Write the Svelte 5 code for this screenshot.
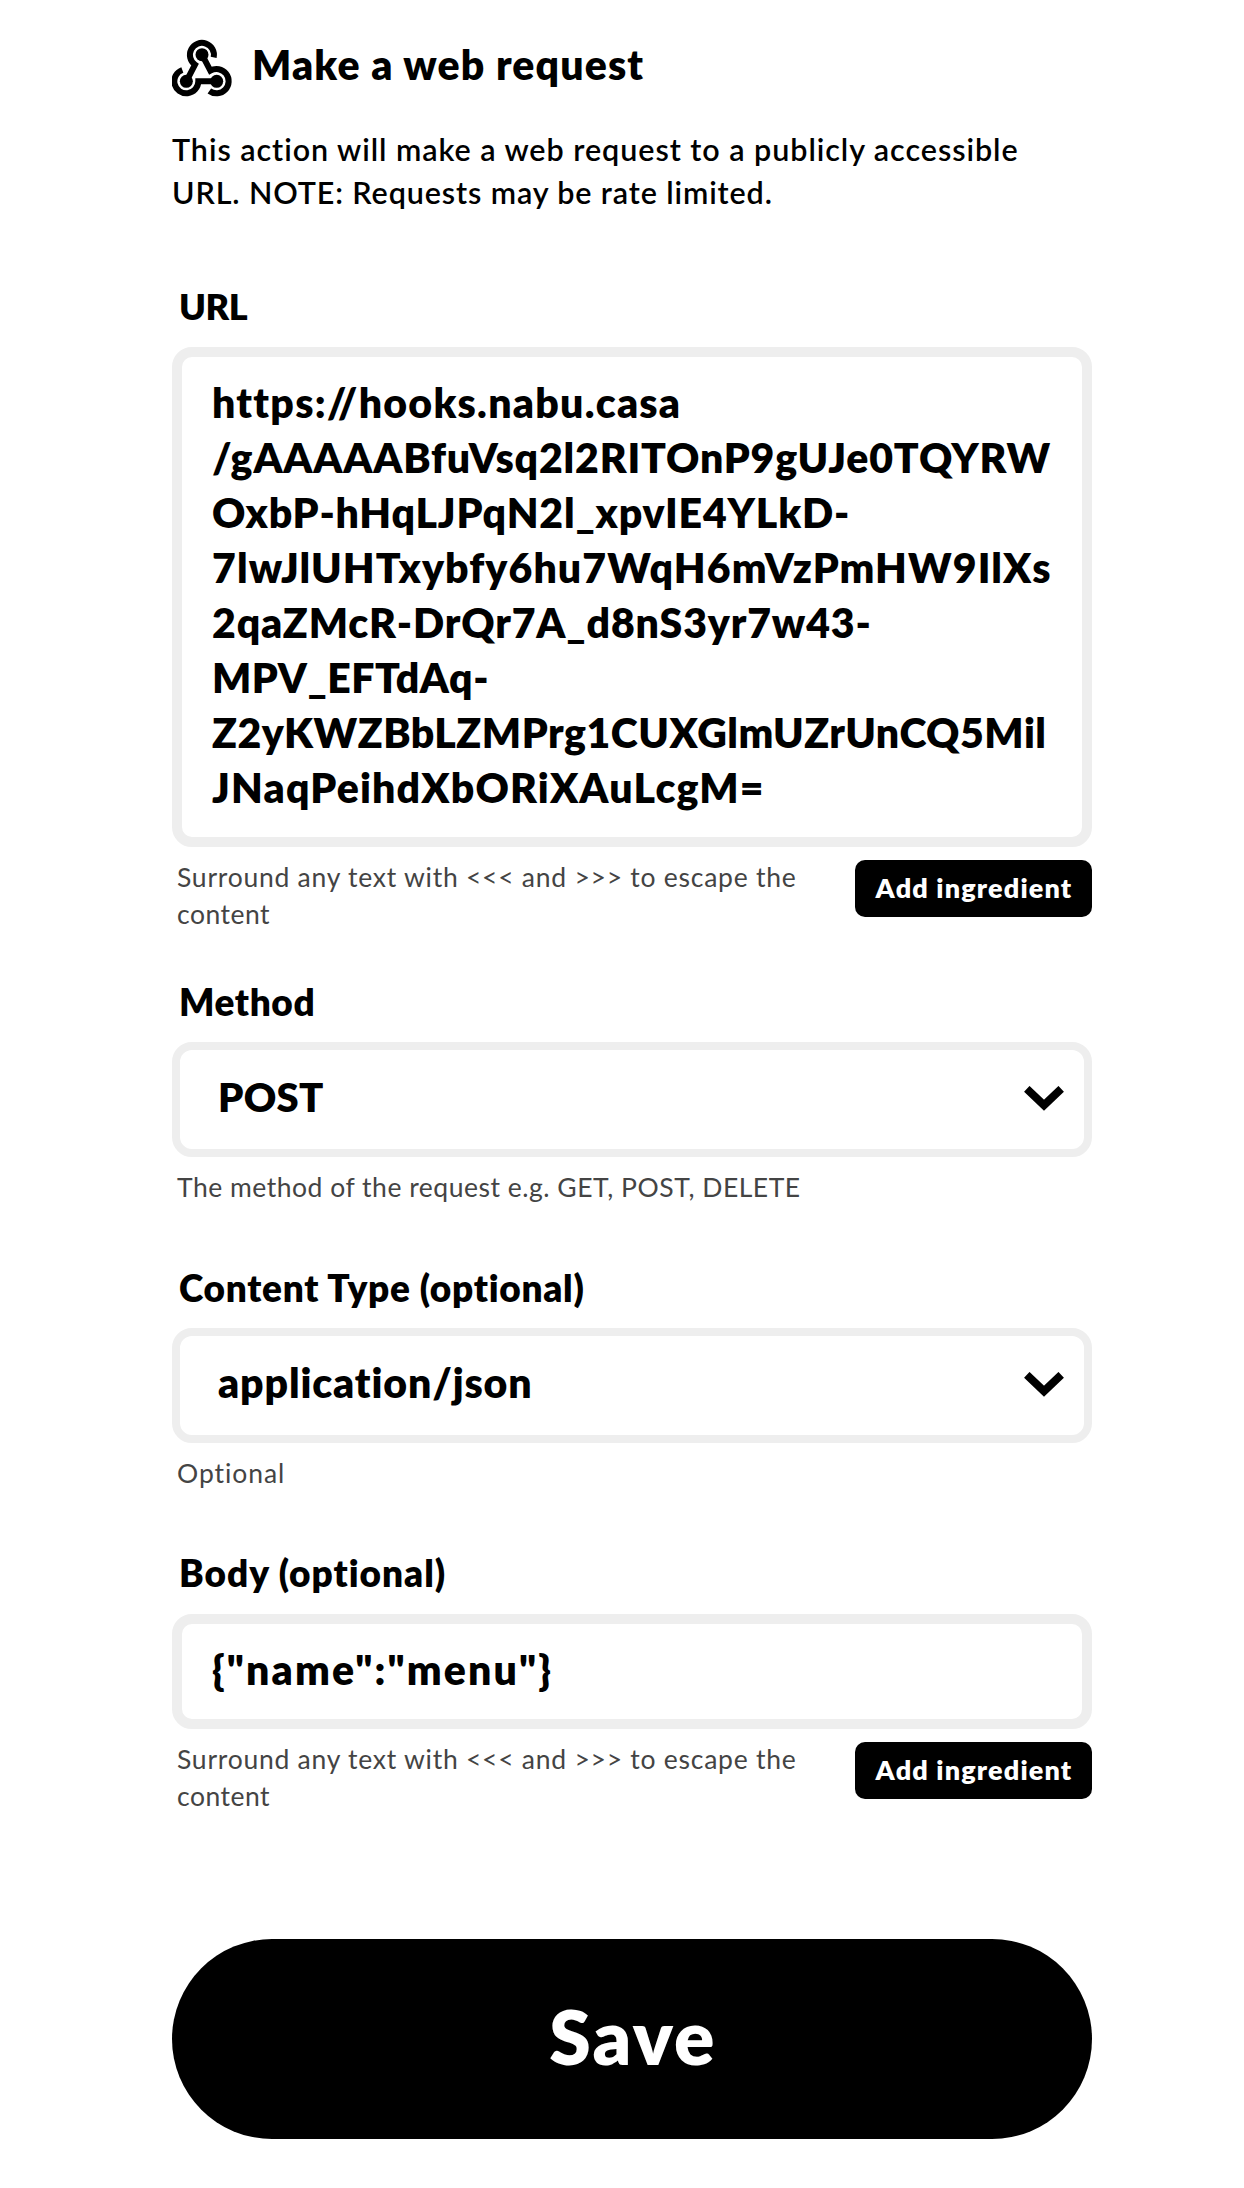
<script>
  const urlLines = [
    'https://hooks.nabu.casa',
    '/gAAAAABfuVsq2l2RITOnP9gUJe0TQYRW',
    'OxbP-hHqLJPqN2l_xpvIE4YLkD-',
    '7lwJlUHTxybfy6hu7WqH6mVzPmHW9IlXs',
    '2qaZMcR-DrQr7A_d8nS3yr7w43-',
    'MPV_EFTdAq-',
    'Z2yKWZBbLZMPrg1CUXGlmUZrUnCQ5Mil',
    'JNaqPeihdXbORiXAuLcgM='
  ];
  const body = '{"name":"menu"}';
</script>

{#snippet chevron()}
  <svg class="chevron" viewBox="0 0 40 25" aria-hidden="true">
    <path d="M2.8 2.8 20 19.2 37.2 2.8" fill="none" stroke="#000" stroke-width="7.9" />
  </svg>
{/snippet}

{#snippet escapeHint()}
  <div class="foot">
    <p class="hint">
      <span class="escape">Surround any text with &lt;&lt;&lt; and &gt;&gt;&gt; to escape the</span>
      <span class="content">content</span>
    </p>
    <button class="add">Add ingredient</button>
  </div>
{/snippet}

<main>
  <header>
    <svg class="webhook" viewBox="18 12 180 180" aria-hidden="true">
      <g fill="none" stroke="#000" stroke-width="18">
        <path d="M143 70A36 36 0 1 0 87 92L61 142" />
        <path d="M108 62 133 110A36.500 36.500 0 1 1 130 171" />
        <path d="M152 142H97A36 36 0 1 1 49 108" />
      </g>
      <circle cx="108" cy="62" r="19.500" />
      <circle cx="61" cy="142" r="19.500" />
      <circle cx="152" cy="142" r="19.500" />
    </svg>
    <h1>Make a web request</h1>
  </header>
  <p class="desc">
    <span class="d1">This action will make a web request to a publicly accessible</span>
    <span class="d2">URL. NOTE: Requests may be rate limited.</span>
  </p>

  <section class="url-field">
    <h2 class="url-label">URL</h2>
    <div class="box text url">
      {#each urlLines as line}<span>{line}</span>{/each}
    </div>
    {@render escapeHint()}
  </section>

  <section class="method-field">
    <h2 class="method-label">Method</h2>
    <div class="box select"><span class="post">POST</span>{@render chevron()}</div>
    <p class="hint"><span class="method-hint">The method of the request e.g. GET, POST, DELETE</span></p>
  </section>

  <section class="type-field">
    <h2 class="type-label">Content Type (optional)</h2>
    <div class="box select"><span class="json">application/json</span>{@render chevron()}</div>
    <p class="hint"><span class="optional">Optional</span></p>
  </section>

  <section class="body-field">
    <h2 class="body-label">Body (optional)</h2>
    <div class="box text single"><span>{body}</span></div>
    {@render escapeHint()}
  </section>

  <button class="save">Save</button>
</main>

<style>
  :global(body) { background: #fff; }
  main {
    box-sizing: border-box;
    width: 1244px;
    height: 2188px;
    padding: 38px 152px 0 172px;
    font-family: Lato, "Open Sans", sans-serif;
    color: #000;
    white-space: nowrap;
  }
  h1, h2, p { margin: 0; }
  span { display: block; }
  button {
    border: 0;
    background: #000;
    color: #fff;
    font-family: inherit;
    font-weight: 800;
    white-space: nowrap;
  }

  header { display: flex; align-items: center; height: 60px; gap: 20px; }
  .webhook { width: 60px; height: 60px; }
  h1 { font-size: 41px; line-height: 48px; font-weight: 800; letter-spacing: 1.11px; padding-bottom: 6px; }
  .desc { margin-top: 30px; font-size: 30.5px; line-height: 43px; font-weight: 600; }
  .d1 { letter-spacing: 0.95px; }
  .d2 { letter-spacing: 0.88px; }

  h2 { font-size: 37px; line-height: 44px; font-weight: 800; padding: 1px 0 0 7px; margin-bottom: 18px; }
  .url-field { height: 696px; margin-top: 69px; }
  .method-field { height: 286px; }
  .type-field { height: 285px; }
  .body-field { height: 389px; }
  .url-label { font-size: 36px; letter-spacing: -0.5px; margin-bottom: 19px; }
  .method-label { letter-spacing: 0.6px; }
  .type-label { letter-spacing: 0.7px; }
  .body-label { letter-spacing: 0.98px; margin-bottom: 19px; }

  .box {
    box-sizing: border-box;
    width: 920px;
    border: 10px solid #eee;
    border-radius: 20px;
    font-size: 41px;
    font-weight: 800;
  }
  .text { padding: 18px 30px 22px; line-height: 55px; }
  .url span:nth-child(1) { letter-spacing: 1.25px; }
  .url span:nth-child(2) { letter-spacing: 0.82px; }
  .url span:nth-child(3) { letter-spacing: 0.82px; }
  .url span:nth-child(4) { letter-spacing: 1.1px; }
  .url span:nth-child(5) { letter-spacing: 0.85px; }
  .url span:nth-child(6) { letter-spacing: 0.5px; }
  .url span:nth-child(7) { letter-spacing: 0.51px; }
  .url span:nth-child(8) { letter-spacing: 1.15px; }
  .single { height: 115px; letter-spacing: 2.12px; }
  .select {
    display: flex;
    align-items: center;
    justify-content: space-between;
    height: 115px;
    padding: 0 20px 0 38px;
    border-width: 8px;
    line-height: 48px;
  }
  .select span { padding-bottom: 5px; }
  .select .post { font-size: 40px; letter-spacing: 0.27px; }
  .json { letter-spacing: 0.86px; }
  .chevron { width: 40px; height: 25px; margin-bottom: 2px; }

  .foot { display: flex; justify-content: space-between; align-items: flex-start; }
  .hint { padding: 12px 0 0 5px; font-size: 26.5px; line-height: 37px; color: #444; }
  .escape { letter-spacing: 0.75px; }
  .content { letter-spacing: 0.5px; }
  .method-hint { letter-spacing: 0.51px; }
  .optional { letter-spacing: 0.95px; }
  .add {
    width: 237px;
    height: 57px;
    margin-top: 13px;
    padding: 0 0 3px 1px;
    border-radius: 10px;
    font-size: 27px;
    letter-spacing: 1.15px;
  }
  .save {
    display: block;
    width: 920px;
    height: 200px;
    padding: 0 0 6px 2px;
    border-radius: 100px;
    font-size: 75px;
    letter-spacing: 2.3px;
  }
</style>
